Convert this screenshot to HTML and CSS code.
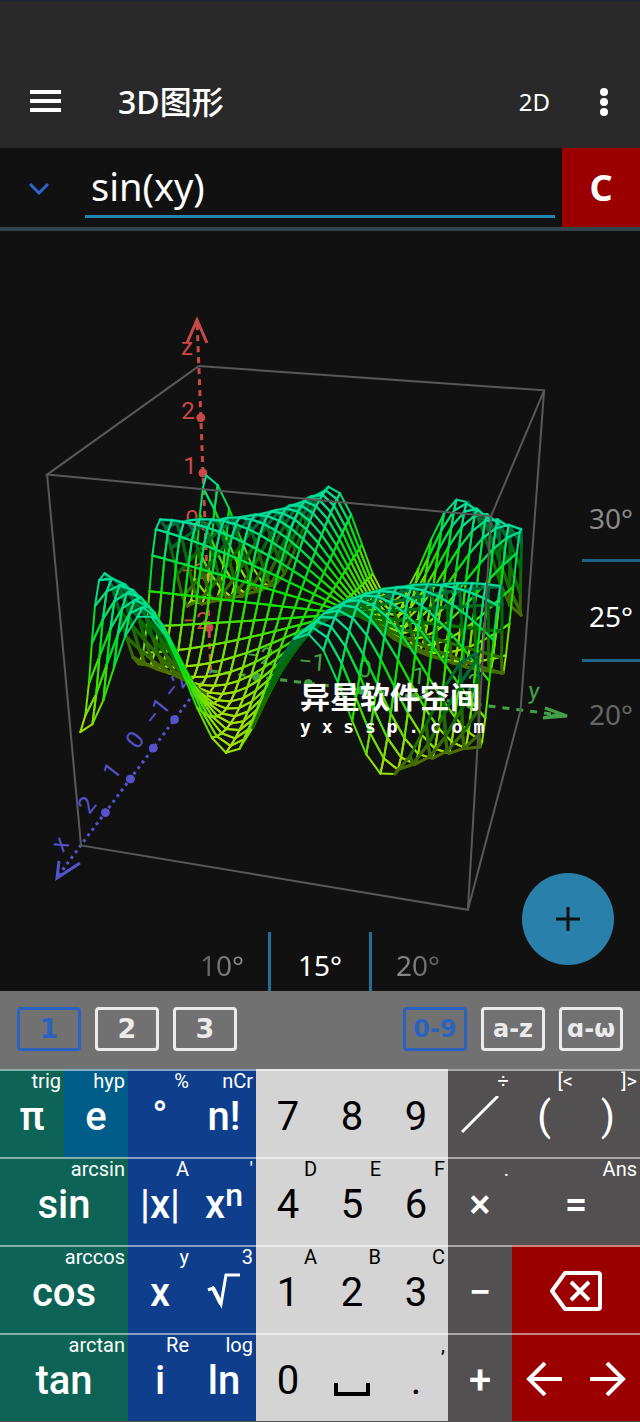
FILE: index.html
```html
<!DOCTYPE html>
<html lang="zh">
<head>
    <meta charset="UTF-8">
    <meta name="viewport" content="width=device-width, initial-scale=1">
    <title>3D图形</title>
    <link rel="stylesheet" href="styles.css">
</head>
<body>
    <!-- Top Bar -->
    <header class="topbar">
        <button class="icon-btn menu-btn" aria-label="Menu">
            <svg width="32" height="24" viewBox="0 0 32 24"><path d="M0 2h31M0 11h31M0 20h31" stroke="#fff" stroke-width="4"/></svg>
        </button>
        <h1>3D图形</h1>
        <button class="mode-2d">2D</button>
        <button class="icon-btn more-btn" aria-label="More">
            <svg width="8" height="28" viewBox="0 0 8 28" fill="#fff"><circle cx="4" cy="4" r="4"/><circle cx="4" cy="14" r="4"/><circle cx="4" cy="24" r="4"/></svg>
        </button>
    </header>

    <!-- Expression -->
    <div class="expression">
        <button class="icon-btn expand-btn" aria-label="Expand">
            <svg width="20" height="14" viewBox="0 0 20 14"><path d="M1 3l9 9 9-9" fill="none" stroke="#2a66cc" stroke-width="3"/></svg>
        </button>
        <input class="expression-input" type="text" value="sin(xy)" aria-label="Expression">
        <button class="clear-btn">C</button>
    </div>

    <!-- Plot -->
    <main class="plot">
        <svg id="scene" viewBox="0 0 640 760">
            <g id="axes"></g>
            <g id="surface"></g>
            <g id="box"></g>
        </svg>
        <div class="watermark">
            <strong>异星软件空间</strong>
            <span>y x s s p . c o m</span>
        </div>
        <div class="ruler-v">
            <span>30°</span>
            <span class="current">25°</span>
            <span class="far">20°</span>
        </div>
        <div class="ruler-h">
            <span class="fade-left">10°</span>
            <span class="current">15°</span>
            <span class="fade-right">20°</span>
        </div>
        <button class="fab" aria-label="Add">
            <svg width="24" height="24" viewBox="0 0 24 24"><path d="M12 0v24M0 12h24" stroke="#111" stroke-width="3"/></svg>
        </button>
    </main>

    <!-- Keyboard Tabs -->
    <nav class="tabs">
        <button class="tab num active">1</button>
        <button class="tab num">2</button>
        <button class="tab num">3</button>
        <span class="spacer"></span>
        <button class="tab active">0-9</button>
        <button class="tab">a-z</button>
        <button class="tab">ɑ-ω</button>
    </nav>

    <!-- Keypad -->
    <section class="keypad">
        <button class="key green"><small>trig</small><b>π</b></button>
        <button class="key teal"><small>hyp</small><b>e</b></button>
        <button class="key blue"><small>%</small><b>°</b></button>
        <button class="key blue"><small>nCr</small><b>n!</b></button>
        <button class="key digit"><small></small><b>7</b></button>
        <button class="key digit"><small></small><b>8</b></button>
        <button class="key digit"><small></small><b>9</b></button>
        <button class="key op" aria-label="Fraction"><small>÷</small><svg width="38" height="38" viewBox="0 0 38 38"><path d="M1 36L37 0" stroke-width="3"/></svg></button>
        <button class="key op thin"><small>[&lt;</small><b>(</b></button>
        <button class="key op thin"><small>]&gt;</small><b>)</b></button>

        <button class="key green wide"><small>arcsin</small><b>sin</b></button>
        <button class="key blue"><small>A</small><b>|x|</b></button>
        <button class="key blue"><small>'</small><b>x<sup>n</sup></b></button>
        <button class="key digit"><small>D</small><b>4</b></button>
        <button class="key digit"><small>E</small><b>5</b></button>
        <button class="key digit"><small>F</small><b>6</b></button>
        <button class="key op"><small>.</small><b>×</b></button>
        <button class="key op wide"><small>Ans</small><b>=</b></button>

        <button class="key green wide"><small>arccos</small><b>cos</b></button>
        <button class="key blue"><small>y</small><b>x</b></button>
        <button class="key blue" aria-label="Square root"><small>3</small><svg width="34" height="36" viewBox="0 0 34 36"><path d="M1 17l5-2 8 16L19 2h14" stroke-width="3"/><path d="M6 15l8 16" stroke-width="4"/></svg></button>
        <button class="key digit"><small>A</small><b>1</b></button>
        <button class="key digit"><small>B</small><b>2</b></button>
        <button class="key digit"><small>C</small><b>3</b></button>
        <button class="key op"><small></small><b>−</b></button>
        <button class="key red wide" aria-label="Backspace"><small></small><svg width="52" height="40" viewBox="0 0 52 40"><path d="M15 2h33q2 0 2 2v32q0 2-2 2H15L2 20z M21 11l18 18M39 11L21 29" stroke-width="4" stroke-linejoin="round"/></svg></button>

        <button class="key green wide"><small>arctan</small><b>tan</b></button>
        <button class="key blue"><small>Re</small><b>i</b></button>
        <button class="key blue"><small>log</small><b>ln</b></button>
        <button class="key digit"><small></small><b>0</b></button>
        <button class="key digit space" aria-label="Space"><small></small><svg width="36" height="14" viewBox="0 0 36 14"><path d="M2 0v11h32V0" stroke-width="4"/></svg></button>
        <button class="key digit"><small>,</small><b>.</b></button>
        <button class="key op"><small></small><b>+</b></button>
        <button class="key red" aria-label="Left"><small></small><svg width="36" height="34" viewBox="0 0 36 34"><path d="M36 17H3M19 1L3 17l16 16" stroke-width="4"/></svg></button>
        <button class="key red" aria-label="Right"><small></small><svg width="36" height="34" viewBox="0 0 36 34"><path d="M0 17h33M17 1l16 16-16 16" stroke-width="4"/></svg></button>
    </section>
    <script src="plot.js"></script>
</body>
</html>
```

FILE: styles.css
```css
* {
    box-sizing: border-box;
}

body {
    display: flex;
    flex-direction: column;
    min-height: 100vh;
    margin: 0;
    background: #111;
    color: #fff;
    font-family: "Noto Sans", "Noto Sans CJK SC", sans-serif;
}

button {
    margin: 0;
    padding: 0;
    border: 0;
    background: none;
    color: inherit;
    font: inherit;
    cursor: pointer;
}

svg {
    display: block;
}

/* Top Bar */
.topbar {
    display: flex;
    align-items: center;
    height: 148px;
    padding: 54px 32px 0 30px;
    border-top: 1px solid #1c2340;
    background: #292929;
}

.topbar h1 {
    flex: 1;
    margin: 0 0 0 56px;
    font-size: 32px;
    font-weight: 500;
    line-height: 48px;
}

.mode-2d {
    margin-right: 50px;
    font-size: 24px;
}

/* Expression */
.expression {
    display: flex;
    height: 83px;
    border-bottom: 4px solid #33454c;
}

.expand-btn {
    padding: 0 36px 0 29px;
}

.expression-input {
    flex: 1;
    min-width: 0;
    height: 70px;
    margin-right: 7px;
    padding: 8px 6px 0;
    border: 0;
    border-bottom: 3px solid #2783b4;
    outline: 0;
    background: none;
    color: #fff;
    font: 38px "Noto Sans", sans-serif;
}

.clear-btn {
    width: 78px;
    background: #9b0000;
    font-size: 36px;
    font-weight: 700;
}

/* Plot */
.plot {
    position: relative;
    flex: 1;
    font-size: 28px;
}

#scene {
    width: 100%;
}

#scene text {
    font-family: Roboto, sans-serif;
    font-size: 24px;
    text-anchor: middle;
    dominant-baseline: central;
}

#surface path {
    fill: none;
    stroke-width: 2;
    stroke-linecap: round;
}

#surface .under {
    stroke-width: 3;
}

#box path {
    fill: none;
    stroke: #585858;
    stroke-width: 2;
}

.axis path {
    fill: none;
    stroke-width: 3;
}

.axis-x {
    fill: #5552cc;
    stroke: #5552cc;
}

.axis-y {
    fill: #43a047;
    stroke: #43a047;
}

.axis-z {
    fill: #cb4848;
    stroke: #cb4848;
}

.axis text {
    stroke: none;
}

.watermark {
    position: absolute;
    top: 442px;
    left: 300px;
    display: flex;
    flex-direction: column;
    white-space: nowrap;
}

.watermark strong {
    font: 700 30px/44px "Noto Sans CJK SC", sans-serif;
}

.watermark span {
    font: 700 18px/20px "DejaVu Sans Mono", monospace;
}

.ruler-v {
    position: absolute;
    top: 238px;
    right: 0;
    width: 58px;
    color: #8a8a8a;
    text-align: center;
}

.ruler-v span {
    display: block;
    line-height: 98px;
}

.ruler-v .far {
    color: #666;
}

.ruler-v .current {
    position: relative;
}

.ruler-v .current::before {
    content: "";
    position: absolute;
    inset: -8px 0 3px;
    border: solid #1f6484;
    border-width: 3px 0;
}

.ruler-h {
    position: absolute;
    bottom: 0;
    left: 0;
    right: 0;
    display: flex;
    justify-content: center;
    height: 59px;
    line-height: 66px;
    text-align: center;
}

.ruler-h span {
    width: 92px;
}

.ruler-h .current {
    width: 104px;
    border: solid #1f6f96;
    border-width: 0 3px;
}

.ruler-v .current,
.ruler-h .current {
    color: #fff;
}

.ruler-h .fade-left {
    background: linear-gradient(90deg, #444, #aaa) text;
    color: transparent;
}

.ruler-h .fade-right {
    background: linear-gradient(90deg, #aaa, #444) text;
    color: transparent;
}

.fab {
    position: absolute;
    right: 26px;
    bottom: 26px;
    display: grid;
    place-items: center;
    width: 92px;
    height: 92px;
    border-radius: 50%;
    background: #2980aa;
}

/* Keyboard Tabs */
.tabs {
    display: flex;
    align-items: center;
    gap: 14px;
    height: 78px;
    padding: 0 17px 2px;
    background: #717171;
}

.tab {
    width: 64px;
    height: 44px;
    border: 3px solid #ebebeb;
    border-radius: 4px;
    color: #ebebeb;
    font: 700 24px/36px "DejaVu Sans", sans-serif;
}

.tab.num {
    font-size: 27px;
}

.tab.active {
    border-color: #2a62c0;
    color: #2a62c0;
}

.spacer {
    flex: 1;
}

/* Keypad */
.keypad {
    display: grid;
    grid-template-columns: repeat(10, 1fr);
    grid-auto-rows: 88px;
    padding-bottom: 1px;
    background: #525051;
    font-family: Roboto, sans-serif;
}

.key {
    display: grid;
    grid-template-rows: 20px 48px 1fr;
    justify-items: center;
    align-items: center;
    border-top: 2px solid rgba(255, 255, 255, 0.5);
}

.key small {
    justify-self: end;
    height: 20px;
    padding-right: 3px;
    font-size: 20px;
    line-height: 20px;
}

.key b {
    margin-top: 4px;
    font-size: 40px;
    font-weight: 500;
    line-height: 48px;
}

.key sup {
    font-size: 32px;
    line-height: 0;
    vertical-align: 12px;
}

.key svg {
    fill: none;
    stroke: currentColor;
}

.wide {
    grid-column: span 2;
}

.green {
    background-color: #0d6356;
}

.teal {
    background-color: #005c89;
}

.blue {
    background-color: #0f3f8c;
}

.digit {
    background-color: #d4d4d4;
    color: #000;
}

.op {
    background-color: #525051;
}

.red {
    background-color: #9b0000;
}

.digit b,
.thin b {
    font-weight: 400;
}

.space svg {
    align-self: end;
    margin-bottom: 6px;
}
```

FILE: plot.js
```js
// Half size of the box, half size of the plotted range, cells per side
const BOX = 2.9;
const RANGE = 2.8;
const CELLS = 28;

// Camera matrix, rows: screen x, screen y, depth
const CAMERA = [
    [-30.817741, 59.062912, -6.65452, 319.847072],
    [9.990091, 2.711951, -66.989044, 379.694586],
    [-0.043533, -0.011842, -0.020838, 1]
];

function project(x, y, z) {
    const [u, v, w] = CAMERA.map(r => r[0] * x + r[1] * y + r[2] * z + r[3]);
    return { x: u / w, y: v / w, depth: w, z: z };
}

function line(points) {
    return 'M' + points.map(p => p.x.toFixed(1) + ' ' + p.y.toFixed(1)).join('L');
}

// Yellow-green at the bottom, green in the middle, teal at the top
function color(z, front) {
    const r = z < 0.2 ? 165 * (0.2 - z) / 1.2 : 0;
    const b = z > 0.1 ? 160 * (z - 0.1) / 0.9 : 0;
    const k = front ? 1 : 0.48;
    return `rgb(${[r, 224, b].map(c => Math.round(c * k)).join(',')})`;
}

function drawSurface() {
    const vertex = (i, j) => {
        const x = -RANGE + 2 * RANGE * i / CELLS;
        const y = -RANGE + 2 * RANGE * j / CELLS;
        return project(x, y, Math.sin(x * y));
    };

    const cells = [];
    for (let i = 0; i < CELLS; i++) {
        for (let j = 0; j < CELLS; j++) {
            const p = [vertex(i, j), vertex(i + 1, j), vertex(i + 1, j + 1), vertex(i, j + 1)];
            const area = (p[2].x - p[0].x) * (p[3].y - p[1].y) - (p[2].y - p[0].y) * (p[3].x - p[1].x);
            cells.push({ p, front: area < 0, depth: p[0].depth + p[1].depth + p[2].depth + p[3].depth });
        }
    }
    cells.sort((a, b) => b.depth - a.depth);

    document.getElementById('surface').innerHTML = cells.map(cell =>
        cell.p.map((a, k) => {
            const b = cell.p[(k + 1) % 4];
            const side = cell.front ? 'upper' : 'under';
            return `<path class="${side}" d="${line([a, b])}" stroke="${color((a.z + b.z) / 2, cell.front)}"/>`;
        }).join('')
    ).join('');
}

function drawBox() {
    const c = (x, y, z) => project(x * BOX, y * BOX, z * BOX);
    const top = line([c(-1, -1, 1), c(-1, 1, 1), c(1, 1, 1), c(1, -1, 1), c(-1, -1, 1)]);
    const sides = line([c(1, -1, 1), c(1, -1, -1), c(1, 1, -1), c(-1, 1, -1), c(-1, 1, 1)]);
    const front = line([c(1, 1, 1), c(1, 1, -1)]);
    document.getElementById('box').innerHTML = `<path d="${top}${sides}${front}"/>`;
}

const axes = [
    {
        name: 'z', at: t => project(-BOX, -BOX, t), dash: '6 5', tip: [197, 88], head: 'M187 112L197 89L207 112',
        dx: -13, dy: -7, turn: 0, label: [187, 116]
    },
    {
        name: 'x', at: t => project(t, -BOX, -BOX), dash: '3 4', tip: [58, 645], head: 'M59 630L57 647L80 632',
        dx: -18, dy: -8, turn: -52, label: [60, 613]
    },
    {
        name: 'y', at: t => project(-BOX, t, -BOX), dash: '7 7', tip: [560, 484], head: 'M545 477L567 485L543 487L560 483',
        dx: 4, dy: -21, turn: 5, label: [534, 460]
    }
];

function drawAxes() {
    document.getElementById('axes').innerHTML = axes.map(axis => {
        const tip = { x: axis.tip[0], y: axis.tip[1] };
        let out = `<path d="${line([axis.at(-BOX), tip])}" stroke-dasharray="${axis.dash}"/>`;
        out += `<path d="${axis.head}"/>`;
        for (let t = -2; t <= 2; t++) {
            const p = axis.at(t);
            const x = Math.round(p.x + axis.dx);
            const y = Math.round(p.y + axis.dy);
            out += `<circle cx="${p.x.toFixed(1)}" cy="${p.y.toFixed(1)}" r="4"/>`;
            out += `<text x="${x}" y="${y}" transform="rotate(${axis.turn} ${x} ${y})">${String(t).replace('-', '−')}</text>`;
        }
        const [lx, ly] = axis.label;
        out += `<text x="${lx}" y="${ly}" transform="rotate(${axis.turn} ${lx} ${ly})">${axis.name}</text>`;
        return `<g class="axis axis-${axis.name}">${out}</g>`;
    }).join('');
}

drawAxes();
drawSurface();
drawBox();
```
